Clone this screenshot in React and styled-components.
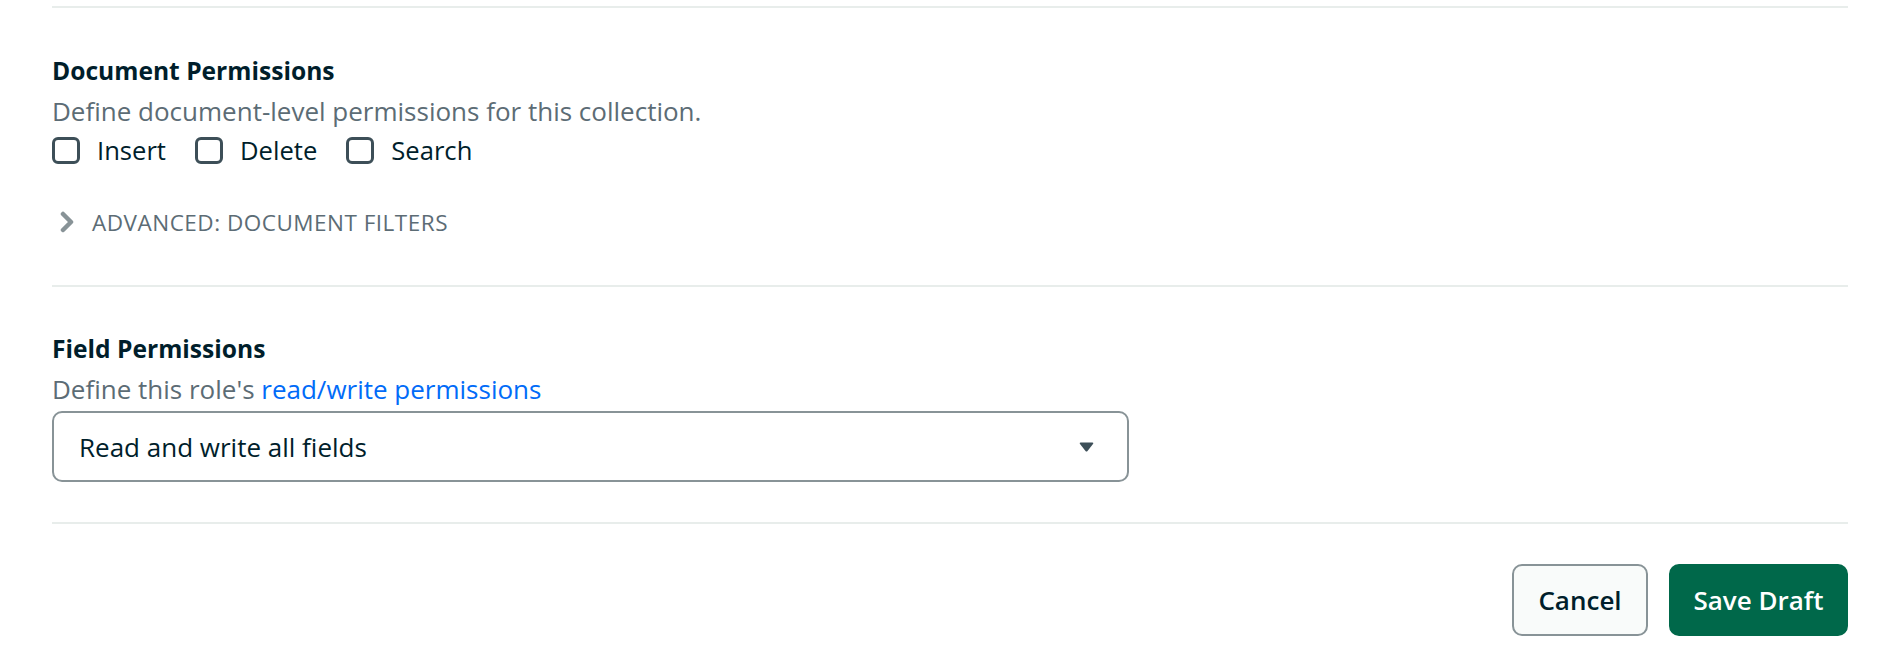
import React from "react";
import styled, { createGlobalStyle } from "styled-components";

const Global = createGlobalStyle`
  html, body { margin: 0; padding: 0; background: #ffffff; }
  body { font-family: "Open Sans", "Noto Sans", sans-serif; color: #001E2B; }
  * { box-sizing: border-box; }
`;

const Page = styled.div`
  padding: 0 54px 0 52px;
`;

const Divider = styled.hr`
  margin: 0;
  border: none;
  height: 2px;
  background: #E8EDEB;
  margin-top: ${(p) => p.$top || 0}px;
`;

const Section = styled.section`
  display: flex;
  flex-direction: column;
  padding: ${(p) => p.$pt}px 0 ${(p) => p.$pb}px;
`;

const Title = styled.h3`
  margin: 0;
  font-size: 24.6px;
  line-height: 40px;
  font-weight: 700;
  color: #001E2B;
`;

const Description = styled.p`
  margin: 0;
  font-size: 26px;
  line-height: 40px;
  color: #5C6C75;
`;

const Link = styled.a`
  color: #016BF8;
  text-decoration: none;
`;

const CheckRow = styled.div`
  display: flex;
  align-items: center;
  height: 40px;
  gap: 29px;
`;

const CheckLabel = styled.label`
  display: flex;
  align-items: center;
  gap: 17px;
  font-size: 25.6px;
  line-height: 40px;
  color: #001E2B;
`;

const Box = styled.span`
  width: 28px;
  height: 27px;
  border: 3px solid #3D4F58;
  border-radius: 6px;
  background: #fff;
  flex: none;
  margin-top: -2px;
`;

const Advanced = styled.div`
  display: flex;
  align-items: center;
  gap: 18px;
  height: 40px;
  margin-top: 31px;
  padding-left: 8px;
  font-size: 22.5px;
  font-weight: 500;
  letter-spacing: 0.5px;
  color: #5C6C75;
  text-transform: uppercase;
`;

const Select = styled.div`
  width: 1077px;
  height: 71px;
  margin-top: 2px;
  border: 2px solid #889397;
  border-radius: 10px;
  display: flex;
  align-items: center;
  justify-content: space-between;
  padding: 0 33px 0 25px;
  font-size: 26px;
  color: #001E2B;
`;

const Footer = styled.div`
  display: flex;
  justify-content: flex-end;
  gap: 21px;
  padding-top: 40px;
  padding-bottom: 18px;
`;

const Button = styled.button`
  height: 72px;
  padding: 0;
  width: ${(p) => (p.$primary ? 179 : 136)}px;
  border-radius: 10px;
  border: 2px solid ${(p) => (p.$primary ? "#00684A" : "#889397")};
  background: ${(p) => (p.$primary ? "#00684A" : "#F9FBFA")};
  color: ${(p) => (p.$primary ? "#FFFFFF" : "#001E2B")};
  font-family: "Open Sans", "Noto Sans", sans-serif;
  font-size: 26px;
  font-weight: 600;
  cursor: pointer;
`;

const Chevron = () => (
  <svg width="14" height="22" viewBox="0 0 14 22">
    <polyline points="3,3 11,11 3,19" fill="none" stroke="#889397" strokeWidth="4.5" strokeLinecap="round" strokeLinejoin="round" />
  </svg>
);

const Caret = () => (
  <svg width="15" height="10" viewBox="0 0 15 10">
    <path d="M1.5 0.5 H13.5 Q15 0.5 14 2 L8.5 9 Q7.5 10 6.5 9 L1 2 Q0 0.5 1.5 0.5 Z" fill="#3D4F58" />
  </svg>
);

const Check = ({ label }) => (
  <CheckLabel>
    <Box />
    {label}
  </CheckLabel>
);

export default function App() {
  return (
    <Page>
      <Global />
      <Divider $top={6} />
      <Section $pt={43} $pb={43}>
        <Title>Document Permissions</Title>
        <Description>Define document-level permissions for this collection.</Description>
        <CheckRow>
          <Check label="Insert" />
          <Check label="Delete" />
          <Check label="Search" />
        </CheckRow>
        <Advanced>
          <Chevron />
          Advanced: Document Filters
        </Advanced>
      </Section>
      <Divider />
      <Section $pt={42} $pb={40}>
        <Title>Field Permissions</Title>
        <Description>
          Define this role's <Link href="#">read/write permissions</Link>
        </Description>
        <Select>
          <span>Read and write all fields</span>
          <Caret />
        </Select>
      </Section>
      <Divider />
      <Footer>
        <Button>Cancel</Button>
        <Button $primary>Save Draft</Button>
      </Footer>
    </Page>
  );
}
